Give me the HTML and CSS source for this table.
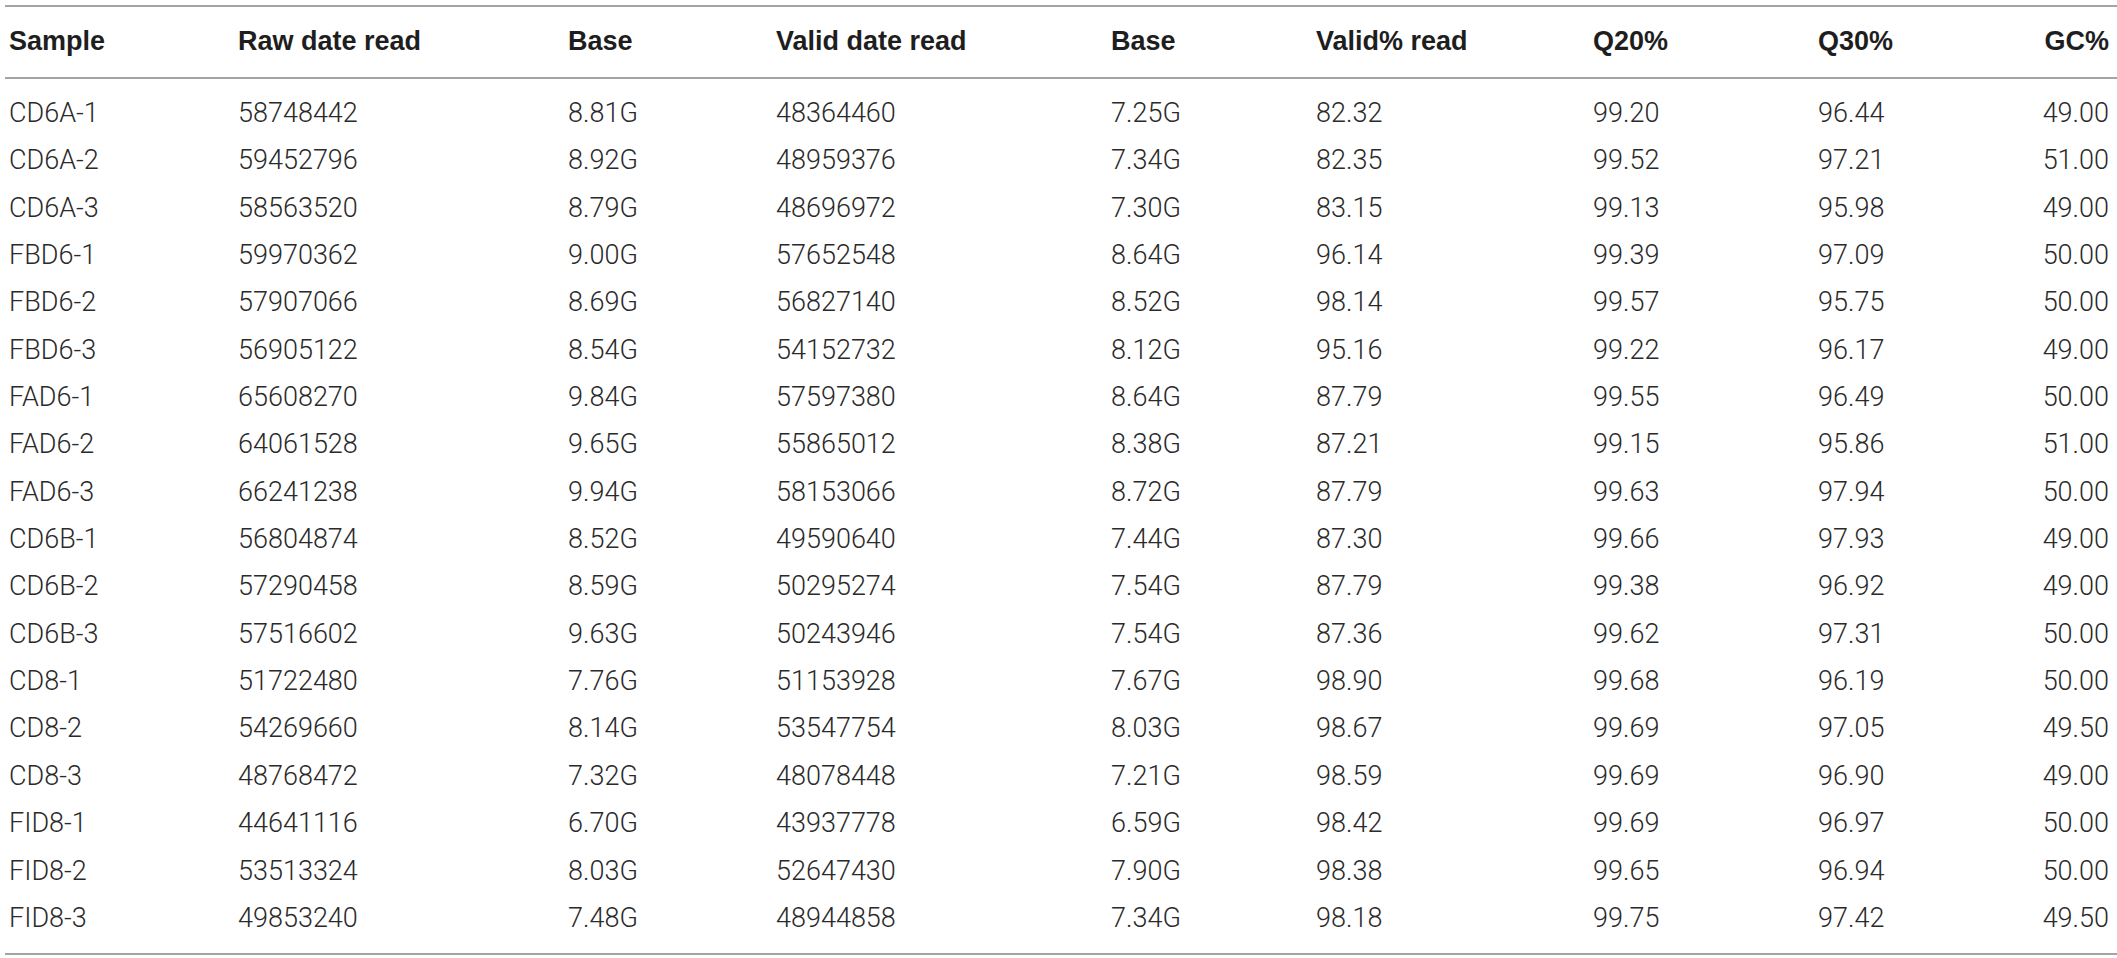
FILE: index.html
```html
<!DOCTYPE html>
<html>
<head>
<meta charset="utf-8">
<link rel="stylesheet" href="styles.css">
</head>
<body>
<table class="stats">
  <colgroup>
    <col class="c1"><col class="c2"><col class="c3"><col class="c4"><col class="c5"><col class="c6"><col class="c7"><col class="c8"><col class="c9">
  </colgroup>
  <thead>
    <tr><th>Sample</th><th>Raw date read</th><th>Base</th><th>Valid date read</th><th>Base</th><th>Valid% read</th><th>Q20%</th><th>Q30%</th><th class="r">GC%</th></tr>
  </thead>
  <tbody>
    <tr><td>CD6A-1</td><td>58748442</td><td>8.81G</td><td>48364460</td><td>7.25G</td><td>82.32</td><td>99.20</td><td>96.44</td><td class="r">49.00</td></tr>
    <tr><td>CD6A-2</td><td>59452796</td><td>8.92G</td><td>48959376</td><td>7.34G</td><td>82.35</td><td>99.52</td><td>97.21</td><td class="r">51.00</td></tr>
    <tr><td>CD6A-3</td><td>58563520</td><td>8.79G</td><td>48696972</td><td>7.30G</td><td>83.15</td><td>99.13</td><td>95.98</td><td class="r">49.00</td></tr>
    <tr><td>FBD6-1</td><td>59970362</td><td>9.00G</td><td>57652548</td><td>8.64G</td><td>96.14</td><td>99.39</td><td>97.09</td><td class="r">50.00</td></tr>
    <tr><td>FBD6-2</td><td>57907066</td><td>8.69G</td><td>56827140</td><td>8.52G</td><td>98.14</td><td>99.57</td><td>95.75</td><td class="r">50.00</td></tr>
    <tr><td>FBD6-3</td><td>56905122</td><td>8.54G</td><td>54152732</td><td>8.12G</td><td>95.16</td><td>99.22</td><td>96.17</td><td class="r">49.00</td></tr>
    <tr><td>FAD6-1</td><td>65608270</td><td>9.84G</td><td>57597380</td><td>8.64G</td><td>87.79</td><td>99.55</td><td>96.49</td><td class="r">50.00</td></tr>
    <tr><td>FAD6-2</td><td>64061528</td><td>9.65G</td><td>55865012</td><td>8.38G</td><td>87.21</td><td>99.15</td><td>95.86</td><td class="r">51.00</td></tr>
    <tr><td>FAD6-3</td><td>66241238</td><td>9.94G</td><td>58153066</td><td>8.72G</td><td>87.79</td><td>99.63</td><td>97.94</td><td class="r">50.00</td></tr>
    <tr><td>CD6B-1</td><td>56804874</td><td>8.52G</td><td>49590640</td><td>7.44G</td><td>87.30</td><td>99.66</td><td>97.93</td><td class="r">49.00</td></tr>
    <tr><td>CD6B-2</td><td>57290458</td><td>8.59G</td><td>50295274</td><td>7.54G</td><td>87.79</td><td>99.38</td><td>96.92</td><td class="r">49.00</td></tr>
    <tr><td>CD6B-3</td><td>57516602</td><td>9.63G</td><td>50243946</td><td>7.54G</td><td>87.36</td><td>99.62</td><td>97.31</td><td class="r">50.00</td></tr>
    <tr><td>CD8-1</td><td>51722480</td><td>7.76G</td><td>51153928</td><td>7.67G</td><td>98.90</td><td>99.68</td><td>96.19</td><td class="r">50.00</td></tr>
    <tr><td>CD8-2</td><td>54269660</td><td>8.14G</td><td>53547754</td><td>8.03G</td><td>98.67</td><td>99.69</td><td>97.05</td><td class="r">49.50</td></tr>
    <tr><td>CD8-3</td><td>48768472</td><td>7.32G</td><td>48078448</td><td>7.21G</td><td>98.59</td><td>99.69</td><td>96.90</td><td class="r">49.00</td></tr>
    <tr><td>FID8-1</td><td>44641116</td><td>6.70G</td><td>43937778</td><td>6.59G</td><td>98.42</td><td>99.69</td><td>96.97</td><td class="r">50.00</td></tr>
    <tr><td>FID8-2</td><td>53513324</td><td>8.03G</td><td>52647430</td><td>7.90G</td><td>98.38</td><td>99.65</td><td>96.94</td><td class="r">50.00</td></tr>
    <tr><td>FID8-3</td><td>49853240</td><td>7.48G</td><td>48944858</td><td>7.34G</td><td>98.18</td><td>99.75</td><td>97.42</td><td class="r">49.50</td></tr>
  </tbody>
</table>
</body>
</html>
```

FILE: styles.css
```css
html, body {
  margin: 0;
  padding: 0;
  background: #ffffff;
}

body {
  padding-top: 5px;
  padding-left: 5px;
}

.stats {
  width: 2112px;
  table-layout: fixed;
  border-collapse: collapse;
  font-family: "Liberation Sans", Arial, Helvetica, sans-serif;
  font-size: 27px;
  border-top: 2px solid #a4a4a4;
  border-bottom: 2px solid #a4a4a4;
}

.c1 { width: 233px; }
.c2 { width: 330px; }
.c3 { width: 208px; }
.c4 { width: 335px; }
.c5 { width: 205px; }
.c6 { width: 277px; }
.c7 { width: 225px; }
.c8 { width: 200px; }
.c9 { width: 99px; }

.stats th,
.stats td {
  padding: 0;
  text-align: left;
  white-space: nowrap;
  vertical-align: top;
}

.stats th:first-child,
.stats td:first-child {
  padding-left: 4px;
}

.stats th {
  font-weight: 700;
  color: #1e1e1e;
  height: 70px;
  line-height: 68px;
  border-bottom: 2px solid #a4a4a4;
}

.stats td {
  font-family: Roboto, "Liberation Sans", Arial, sans-serif;
  font-weight: 300;
  color: #2a2a2a;
  height: 47.35px;
  line-height: 47.35px;
}

.stats tbody tr:first-child td {
  padding-top: 11px;
}

.stats tbody tr:last-child td {
  padding-bottom: 11px;
}

.stats .r {
  text-align: right;
  padding-right: 8px;
}
```
